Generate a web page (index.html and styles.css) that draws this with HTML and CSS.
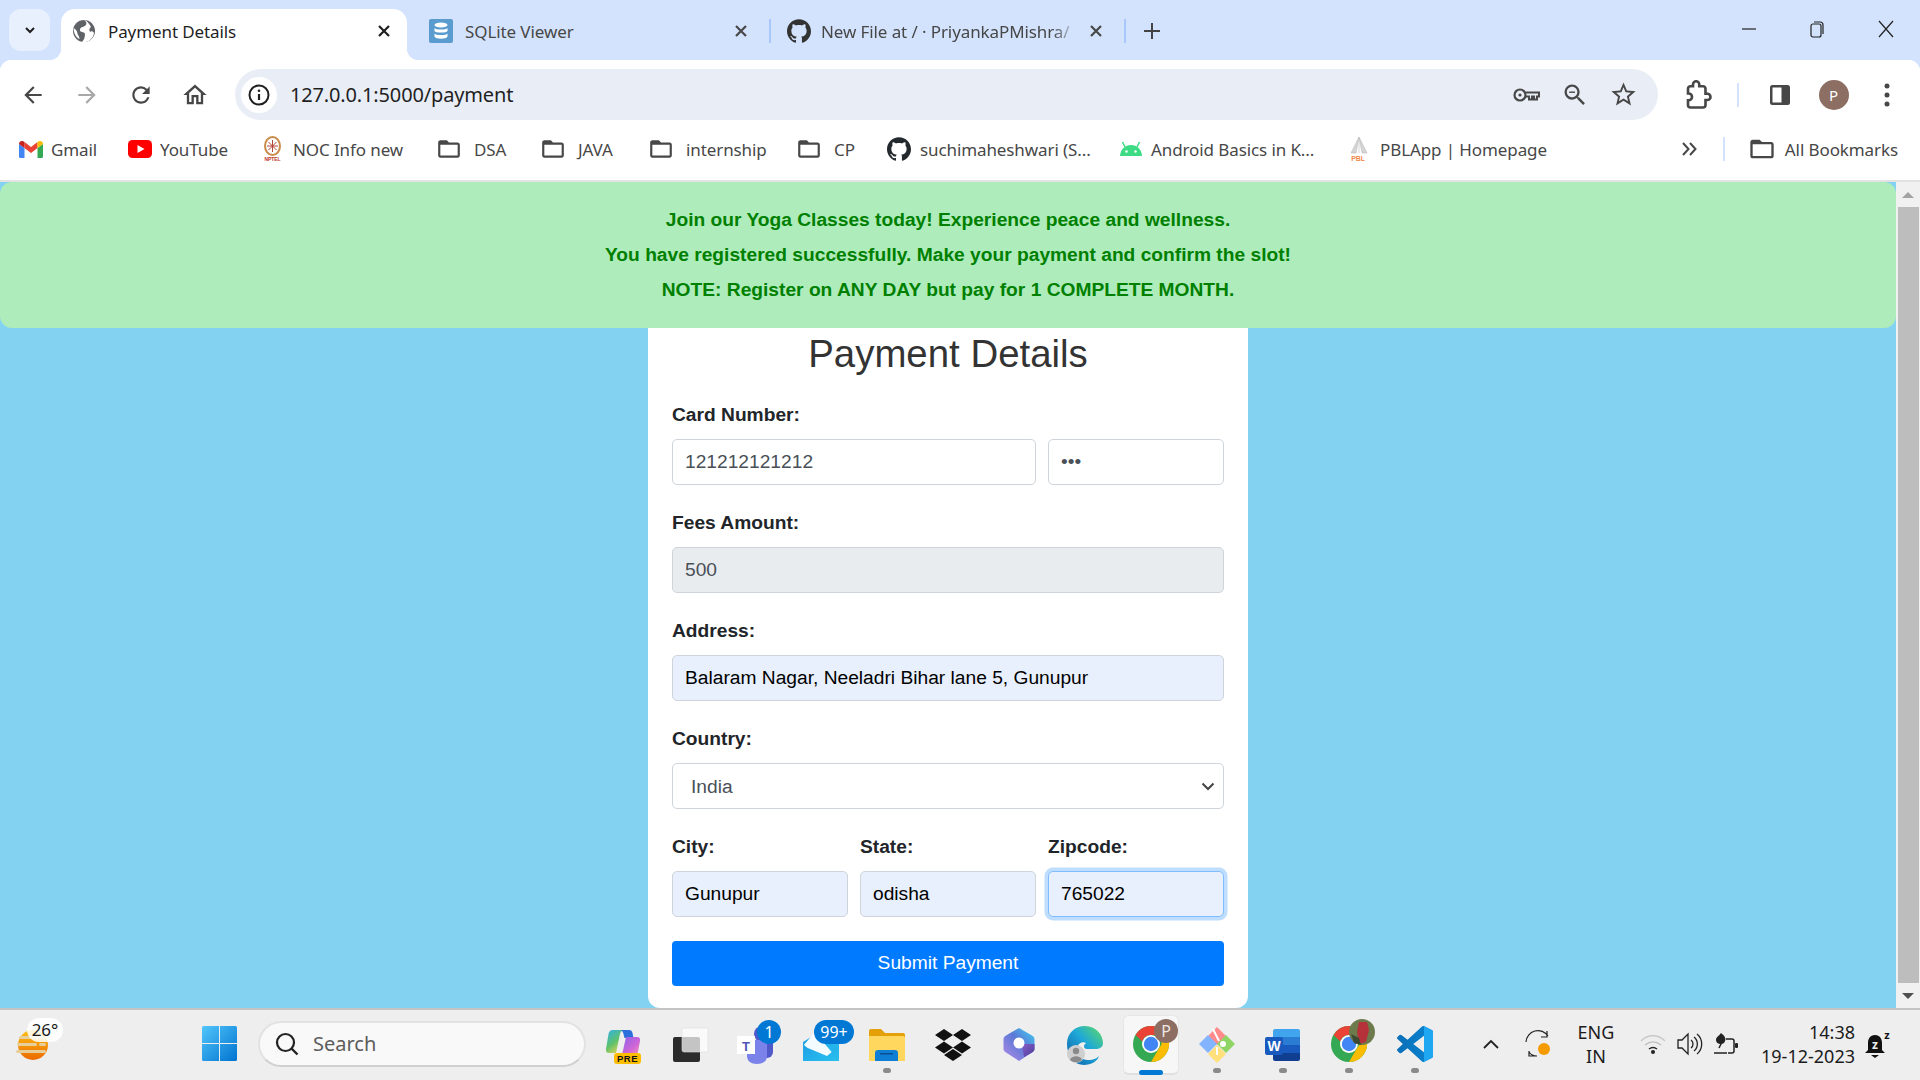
FILE: index.html
```html
<!DOCTYPE html>
<html lang="en">
<head>
<meta charset="utf-8">
<title>Payment Details</title>
<link rel="stylesheet" href="styles.css">
</head>
<body>
<svg class="defs" width="0" height="0" aria-hidden="true">
  <defs>
    <symbol id="gh" viewBox="0 0 24 24"><path d="M12 .297c-6.63 0-12 5.373-12 12 0 5.303 3.438 9.8 8.205 11.385.6.113.82-.258.82-.577 0-.285-.01-1.04-.015-2.04-3.338.724-4.042-1.61-4.042-1.61C4.422 18.07 3.633 17.7 3.633 17.7c-1.087-.744.084-.729.084-.729 1.205.084 1.838 1.236 1.838 1.236 1.07 1.835 2.809 1.305 3.495.998.108-.776.417-1.305.76-1.605-2.665-.3-5.466-1.332-5.466-5.93 0-1.31.465-2.38 1.235-3.22-.135-.303-.54-1.523.105-3.176 0 0 1.005-.322 3.3 1.23.96-.267 1.98-.399 3-.405 1.02.006 2.04.138 3 .405 2.28-1.552 3.285-1.23 3.285-1.23.645 1.653.24 2.873.12 3.176.765.84 1.23 1.91 1.23 3.22 0 4.61-2.805 5.625-5.475 5.92.42.36.81 1.096.81 2.22 0 1.606-.015 2.896-.015 3.286 0 .315.21.69.825.57C20.565 22.092 24 17.592 24 12.297c0-6.627-5.373-12-12-12"/></symbol>
    <symbol id="folder" viewBox="0 0 24 24"><path d="M20 6h-8l-2-2H4c-1.1 0-1.99.9-1.99 2L2 18c0 1.1.9 2 2 2h16c1.1 0 2-.9 2-2V8c0-1.1-.9-2-2-2zm0 12H4V8h16v10z" fill="#474747"/></symbol>
    <symbol id="x" viewBox="0 0 24 24"><path d="M6 6l12 12M18 6L6 18" stroke-width="2.6" fill="none"/></symbol>
    <symbol id="chrome" viewBox="0 0 48 48">
      <circle cx="24" cy="24" r="18" fill="#34a853"/>
      <path fill="#ea4335" d="M24 6a18 18 0 0 1 15.6 9H24a9 9 0 0 0-8.6 6.4L8.6 15A18 18 0 0 1 24 6z"/>
      <path fill="#fbbc04" d="M39.6 15A18 18 0 0 1 24 42l7.8-13.5a9 9 0 0 0 0-13.5z"/>
      <circle cx="24" cy="24" r="9" fill="#fff"/><circle cx="24" cy="24" r="7.2" fill="#4285f4"/>
    </symbol>
    <linearGradient id="gWin" x1="0" y1="0" x2="1" y2="1"><stop offset="0" stop-color="#52c6fb"/><stop offset="1" stop-color="#0073d0"/></linearGradient>
    <linearGradient id="gSun" x1="0" y1="0" x2="0" y2="1"><stop offset="0" stop-color="#fdc013"/><stop offset="1" stop-color="#ec6a00"/></linearGradient>
    <linearGradient id="gCop" x1="0" y1="0" x2=".6" y2="1"><stop offset="0" stop-color="#2fb0ea"/><stop offset=".6" stop-color="#5fc26a"/><stop offset="1" stop-color="#d8d25a"/></linearGradient>
    <linearGradient id="gCop2" x1="0" y1="0" x2="1" y2="1"><stop offset="0" stop-color="#8a63e6"/><stop offset=".6" stop-color="#d165d8"/><stop offset="1" stop-color="#f39ab0"/></linearGradient>
    <linearGradient id="gMail" x1="0" y1="0" x2="1" y2="1"><stop offset="0" stop-color="#1f9fe6"/><stop offset="1" stop-color="#28c0ee"/></linearGradient>
    <linearGradient id="gHex" x1="0" y1="1" x2="1" y2="0"><stop offset="0" stop-color="#b58be8"/><stop offset=".55" stop-color="#5b79d6"/><stop offset="1" stop-color="#3fd2f2"/></linearGradient>
    <linearGradient id="gHex2" x1="0" y1="0" x2="1" y2="1"><stop offset="0" stop-color="#8a5fc8"/><stop offset="1" stop-color="#4a3a98"/></linearGradient>
    <linearGradient id="gEdge" x1="0" y1="1" x2="1" y2="0"><stop offset="0" stop-color="#0c5aa6"/><stop offset=".55" stop-color="#1fa8d8"/><stop offset="1" stop-color="#5fdc63"/></linearGradient>
    <linearGradient id="gVs" x1="0" y1="0" x2="1" y2="0"><stop offset="0" stop-color="#0a6fb8"/><stop offset="1" stop-color="#0a84d0"/></linearGradient>
  </defs>
</svg>

<header class="browser">
  <div class="tabstrip">
    <button class="tab-search"><svg width="14" height="14" viewBox="0 0 14 14"><path d="M3 5l4 4 4-4" fill="none" stroke="#1f1f1f" stroke-width="2"/></svg></button>
    <div class="tab tab-active">
      <svg class="fav" width="24" height="24" viewBox="0 0 24 24"><circle cx="12" cy="12" r="11" fill="#5f6368"/><path d="M12 1c3 2 3 4 1 6-2 1-5 1-5 4s4 1 5 4c0 3-1 6-3 8 6 1 11-3 12-9-1-2-3-2-4-1-1-2-1-4 1-5-2-4-5-7-7-7zM1.500 9c2 1 4 3 4 6 1 2 2 3 2 5-3-1-6-6-6-11z" fill="#fff"/></svg>
      <span class="tab-title">Payment Details</span>
      <svg class="tab-x tab-x-dark" width="20" height="20"><use href="#x"/></svg>
    </div>
    <div class="tab tab-bg">
      <svg class="fav" width="24" height="24" viewBox="0 0 24 24"><rect width="24" height="24" rx="2" fill="#5a9bd0"/><g fill="#fff"><ellipse cx="12" cy="6" rx="6.500" ry="2.600"/><path d="M5.500 9c1 2 12 2 13 0v3c-1 2-12 2-13 0zM5.500 14.500c1 2 12 2 13 0v3c-1 3-12 3-13 0z"/></g></svg>
      <span class="tab-title">SQLite Viewer</span>
      <svg class="tab-x" width="20" height="20"><use href="#x"/></svg>
    </div>
    <i class="tab-sep"></i>
    <div class="tab tab-bg tab-gh">
      <svg class="fav fav-gh" width="24" height="24"><use href="#gh"/></svg>
      <span class="tab-title tab-fade">New File at / · PriyankaPMishra/</span>
      <svg class="tab-x" width="20" height="20"><use href="#x"/></svg>
    </div>
    <i class="tab-sep"></i>
    <svg class="new-tab" width="20" height="20" viewBox="0 0 20 20"><path d="M10 2v16M2 10h16" stroke="#444" stroke-width="2"/></svg>
    <div class="win-controls">
      <svg width="16" height="16" viewBox="0 0 16 16"><path d="M1 8h14" stroke="#222" stroke-width="1.200"/></svg>
      <svg width="16" height="18" viewBox="0 0 16 18"><rect x="2" y="4" width="10" height="13" rx="2" fill="none" stroke="#222" stroke-width="1.200"/><path d="M5 2h6a3 3 0 0 1 3 3v9" fill="none" stroke="#222" stroke-width="1.200"/></svg>
      <svg width="18" height="18" viewBox="0 0 18 18"><path d="M2 1l14 16M16 1L2 17" stroke="#222" stroke-width="1.200"/></svg>
    </div>
  </div>

  <div class="toolbar">
    <button class="tbtn"><svg width="26" height="26" viewBox="0 0 24 24"><path fill="#474747" d="M20 11H7.830l5.590-5.590L12 4l-8 8 8 8 1.410-1.410L7.830 13H20v-2z"/></svg></button>
    <button class="tbtn"><svg width="26" height="26" viewBox="0 0 24 24"><path fill="#a8a8a8" d="M12 4l-1.410 1.410L16.170 11H4v2h12.170l-5.580 5.590L12 20l8-8z"/></svg></button>
    <button class="tbtn"><svg width="26" height="26" viewBox="0 0 24 24"><path fill="#474747" d="M17.650 6.350A7.958 7.958 0 0 0 12 4c-4.420 0-7.990 3.580-7.990 8s3.570 8 7.990 8c3.730 0 6.840-2.550 7.730-6h-2.080A5.990 5.990 0 0 1 12 18c-3.310 0-6-2.690-6-6s2.690-6 6-6c1.660 0 3.140.690 4.220 1.780L13 11h7V4l-2.350 2.350z"/></svg></button>
    <button class="tbtn"><svg width="28" height="28" viewBox="0 0 24 24"><path fill="#474747" d="M12 5.690l5 4.500V18h-2v-6H9v6H7v-7.810l5-4.500M12 3L2 12h3v8h6v-6h2v6h6v-8h3L12 3z"/></svg></button>
    <div class="omnibox">
      <span class="site-info"><svg width="24" height="24" viewBox="0 0 24 24"><circle cx="12" cy="12" r="9.500" fill="none" stroke="#1f1f1f" stroke-width="2"/><path d="M12 11v6" stroke="#1f1f1f" stroke-width="2.200"/><circle cx="12" cy="7.800" r="1.300" fill="#1f1f1f"/></svg></span>
      <span class="url">127.0.0.1:5000/payment</span>
      <span class="omni-actions">
        <button class="obtn"><svg width="30" height="30" viewBox="0 0 30 30"><circle cx="9" cy="15" r="5.500" fill="none" stroke="#474747" stroke-width="2.200"/><circle cx="9" cy="15" r="1.600" fill="#474747"/><path d="M14.500 12.500H28v4h-2v3h-3v-3h-2v3h-3v-3h-3.500" fill="none" stroke="#474747" stroke-width="2"/></svg></button>
        <button class="obtn"><svg width="28" height="28" viewBox="0 0 24 24"><path fill="#474747" d="M15.500 14h-.790l-.280-.270A6.471 6.471 0 0 0 16 9.500 6.500 6.500 0 1 0 9.500 16c1.610 0 3.090-.590 4.230-1.570l.270.280v.790l5 4.990L20.490 19l-4.990-5zm-6 0C7.010 14 5 11.990 5 9.500S7.010 5 9.500 5 14 7.010 14 9.500 11.990 14 9.500 14z"/><path fill="#474747" d="M7 9h5v1.200H7z"/></svg></button>
        <button class="obtn"><svg width="29" height="29" viewBox="0 0 24 24"><path fill="#474747" d="M22 9.240l-7.190-.620L12 2 9.190 8.630 2 9.240l5.460 4.730L5.820 21 12 17.270 18.180 21l-1.630-7.030L22 9.240zM12 15.400l-3.760 2.270 1-4.280-3.320-2.880 4.380-.380L12 6.100l1.710 4.040 4.380.380-3.320 2.880 1 4.280L12 15.400z"/></svg></button>
      </span>
    </div>
    <button class="tbtn tbtn-ext"><svg width="30" height="30" viewBox="0 0 24 24"><path fill="none" stroke="#474747" stroke-width="2.100" d="M18 11V7c0-1.100-.9-2-2-2h-3V3.500C13 2.120 11.880 1 10.500 1S8 2.120 8 3.500V5H6c-1.100 0-2 .9-2 2v3.800h.5c1.490 0 2.700 1.210 2.700 2.700s-1.210 2.700-2.700 2.700H4V20c0 1.100.9 2 2 2h10c1.100 0 2-.9 2-2v-4h1.500c1.380 0 2.500-1.120 2.500-2.500S20.880 11 19.500 11z"/></svg></button>
    <i class="tool-sep"></i>
    <button class="tbtn"><svg width="24" height="24" viewBox="0 0 24 24"><rect x="2" y="2" width="20" height="20" rx="2.500" fill="#474747"/><rect x="4.500" y="4.500" width="9" height="15" fill="#fff"/></svg></button>
    <button class="tbtn tbtn-avatar"><span class="avatar">P</span></button>
    <button class="tbtn"><svg width="8" height="28" viewBox="0 0 8 28"><circle cx="4" cy="5" r="2.500" fill="#474747"/><circle cx="4" cy="14" r="2.500" fill="#474747"/><circle cx="4" cy="23" r="2.500" fill="#474747"/></svg></button>
  </div>

  <nav class="bookmarks">
    <a class="bm bm-gmail"><svg width="24" height="18" viewBox="0 0 24 18"><path fill="#4285f4" d="M0 4v12.500A1.500 1.500 0 0 0 1.500 18h4V8z"/><path fill="#34a853" d="M18.500 8v10h4a1.500 1.500 0 0 0 1.500-1.500V4z"/><path fill="#ea4335" d="M5.500 8V2L12 7l6.500-5v6L12 13z"/><path fill="#c5221f" d="M0 4c0-3 3.500-4 5.500-2v6z"/><path fill="#fbbc04" d="M18.500 2c2-2 5.500-1 5.500 2l-5.500 4z"/></svg>Gmail</a>
    <a class="bm bm-yt"><svg width="24" height="18" viewBox="0 0 24 18"><rect width="24" height="18" rx="4.500" fill="#f00"/><path d="M9.500 5l7 4-7 4z" fill="#fff"/></svg>YouTube</a>
    <a class="bm bm-noc"><svg width="21" height="26" viewBox="0 0 21 26"><ellipse cx="10.500" cy="10" rx="7.500" ry="9" fill="none" stroke="#c98a4a" stroke-width="2"/><g stroke="#b5453a" stroke-width="1"><path d="M10.500 4v12M5 10h11M6.500 6l8 8M14.500 6l-8 8"/></g><text x="10.500" y="25" class="t-noc">NPTEL</text></svg>NOC Info new</a>
    <a class="bm bm-f1"><svg width="26" height="26"><use href="#folder"/></svg>DSA</a>
    <a class="bm bm-f2"><svg width="26" height="26"><use href="#folder"/></svg>JAVA</a>
    <a class="bm bm-f3"><svg width="26" height="26"><use href="#folder"/></svg>internship</a>
    <a class="bm bm-f4"><svg width="26" height="26"><use href="#folder"/></svg>CP</a>
    <a class="bm bm-gh"><svg width="24" height="24" class="gh-dark"><use href="#gh"/></svg>suchimaheshwari (S...</a>
    <a class="bm bm-and"><svg width="24" height="18" viewBox="0 0 24 18"><path d="M1 16C1.500 9 6 5 12 5s10.500 4 11 11z" fill="#3ddc84"/><path d="M6 7L3.500 2M18 7l2.500-5" stroke="#3ddc84" stroke-width="1.500"/><circle cx="7.500" cy="11.500" r="1.200" fill="#fff"/><circle cx="16.500" cy="11.500" r="1.200" fill="#fff"/></svg>Android Basics in K...</a>
    <a class="bm bm-pbl"><svg width="18" height="26" viewBox="0 0 18 26"><path d="M9 1L1 17h5zM9 1l8 16h-5zM9 3v14" fill="#d5d5d5" stroke="#bbb" stroke-width=".6"/><text x="8" y="25" class="t-pbl">PBL</text></svg>PBLApp | Homepage</a>
    <span class="bm-more"><svg width="18" height="18" viewBox="0 0 18 18"><path d="M3 3l5.500 6L3 15M10 3l5.500 6L10 15" fill="none" stroke="#474747" stroke-width="2"/></svg></span>
    <i class="bm-sep"></i>
    <a class="bm bm-all"><svg width="28" height="28"><use href="#folder"/></svg>All Bookmarks</a>
  </nav>
</header>

<main class="viewport">
  <div class="page">
    <section class="banner">
      <p>Join our Yoga Classes today! Experience peace and wellness.</p>
      <p>You have registered successfully. Make your payment and confirm the slot!</p>
      <p>NOTE: Register on ANY DAY but pay for 1 COMPLETE MONTH.</p>
    </section>
    <form class="card">
      <h2>Payment Details</h2>
      <div class="grid3 group">
        <label class="span3">Card Number:</label>
        <input class="field span2" type="text" value="121212121212">
        <input class="field" type="password" value="123">
      </div>
      <div class="group">
        <label>Fees Amount:</label>
        <input class="field field-disabled" type="text" value="500" readonly>
      </div>
      <div class="group">
        <label>Address:</label>
        <input class="field field-auto" type="text" value="Balaram Nagar, Neeladri Bihar lane 5, Gunupur">
      </div>
      <div class="group">
        <label>Country:</label>
        <select class="field field-select"><option>India</option></select>
      </div>
      <div class="grid3 group-last">
        <div><label>City:</label><input class="field field-auto" type="text" value="Gunupur"></div>
        <div><label>State:</label><input class="field field-auto" type="text" value="odisha"></div>
        <div><label>Zipcode:</label><input class="field field-auto field-focus" type="text" value="765022"></div>
      </div>
      <button type="button" class="submit">Submit Payment</button>
    </form>
  </div>
  <aside class="scrollbar">
    <span class="sb-btn"><i class="tri tri-up"></i></span>
    <span class="sb-thumb"></span>
    <span class="sb-btn"><i class="tri tri-down"></i></span>
  </aside>
</main>

<footer class="taskbar">
  <div class="weather">
    <svg width="48" height="44" viewBox="0 0 48 44"><circle cx="32" cy="27" r="15" fill="url(#gSun)"/><g fill="#e7cf9b"><rect x="18" y="18" width="26" height="3" rx="1.500"/><rect x="16" y="25" width="20" height="3" rx="1.500"/><rect x="38" y="25" width="7" height="3" rx="1.500"/><rect x="15" y="32" width="30" height="3" rx="1.500"/></g></svg>
    <span class="temp">26°</span>
  </div>
  <svg class="win-logo" width="35" height="35" viewBox="0 0 35 35"><path fill="url(#gWin)" d="M1.500 0H17v17H0V1.500A1.500 1.500 0 0 1 1.500 0zM18 0h15.500A1.500 1.500 0 0 1 35 1.500V17H18zM0 18h17v17H1.500A1.500 1.500 0 0 1 0 33.500zM18 18h17v15.500a1.500 1.500 0 0 1-1.500 1.500H18z"/></svg>
  <div class="search">
    <svg width="26" height="26" viewBox="0 0 26 26"><circle cx="11.500" cy="11.500" r="8.500" fill="none" stroke="#222" stroke-width="2.200"/><path d="M17.500 17.500l6 6" stroke="#222" stroke-width="2.400"/></svg>
    <span>Search</span>
  </div>
  <div class="apps">
    <div class="app"><svg width="48" height="48" viewBox="0 0 48 48"><path d="M14 10c-3 0-4 2-4.500 4L7 29c-.4 3 1 4 3.500 4H17l4-19c.5-2 2-4 4-4z" fill="url(#gCop)"/><path d="M21 10h9c2 0 3 1 3.500 3l1 5h-9l-1-4c-.5-2-1.500-4-3.500-4z" fill="#2a6fdc"/><path d="M27 17h11c2.500 0 3.500 1.500 3 4l-2 11c-.5 2-2 3-4 3H23z" fill="url(#gCop2)"/><rect x="15" y="33" width="27" height="11" rx="3" fill="#fdbd00"/><text x="28.500" y="42" class="t-pre">PRE</text></svg></div>
    <div class="app"><svg width="48" height="48" viewBox="0 0 48 48"><rect x="8" y="17" width="27" height="25" rx="2" fill="#2b2b2b"/><rect x="17" y="8" width="26" height="24" rx="2" fill="#fff" fill-opacity=".72" stroke="#ddd" stroke-width=".6"/></svg></div>
    <div class="app"><svg class="over" width="48" height="48" viewBox="0 0 48 48"><circle cx="31" cy="14" r="8" fill="#5059c9"/><path d="M30 18h12v14a6 6 0 0 1-6 6h-6z" fill="#5059c9"/><path d="M16 20h20v16c0 5-4 8-10 8s-10-3-10-8z" fill="#7b83eb"/><rect x="6" y="16" width="18" height="18" fill="#fff"/><text x="15" y="31" class="t-t">T</text><circle cx="38" cy="12" r="12" fill="#0078d4"/><text x="38" y="18" class="t-badge">1</text></svg></div>
    <div class="app"><svg class="over" width="48" height="48" viewBox="0 0 48 48"><path d="M6 22l13-8 23 8v19H6z" fill="url(#gMail)"/><path d="M6 26l12-14 24 29z" fill="#fff" opacity=".95"/><path d="M6 41V24l18 17zM24 41l18-15v15z" fill="url(#gMail)"/><rect x="17" y="0" width="40" height="24" rx="12" fill="#0078d4"/><text x="37" y="18" class="t-badge">99+</text></svg></div>
    <div class="app app-dot"><svg width="48" height="48" viewBox="0 0 48 48"><path d="M6 11a2 2 0 0 1 2-2h10l4 4h18a2 2 0 0 1 2 2v4H6z" fill="#e3a008"/><path d="M6 16h34a2 2 0 0 1 2 2v23H6z" fill="#ffd75e"/><path d="M12 33a3 3 0 0 1 3-3h17a3 3 0 0 1 3 3v8H12z" fill="#0f7fd6"/><rect x="17" y="33" width="13" height="1.500" fill="#0a4f8f"/></svg></div>
    <div class="app"><svg width="48" height="48" viewBox="0 0 48 48"><g fill="#111"><path d="M15 9l9 6-9 6-9-6zM33 9l9 6-9 6-9-6zM15 21.500l9 6-9 6-9-6zM33 21.500l9 6-9 6-9-6zM24 29l9 6-9 6-9-6z"/></g></svg></div>
    <div class="app"><svg width="48" height="48" viewBox="0 0 48 48"><path d="M24 8l13 7.500c1.500 1 2.500 2 2.500 3.500v10c0 1.500-1 2.500-2.500 3.500L24 41l-13-8.500C9.500 31.500 8.500 30.500 8.500 29V19c0-1.500 1-2.500 2.500-3.500z" fill="url(#gHex)"/><path d="M27 24h12.500v5c0 1.500-1 2.500-2.500 3.500L29 37z" fill="url(#gHex2)"/><circle cx="24" cy="23" r="5.500" fill="#fff"/></svg></div>
    <div class="app"><svg width="48" height="48" viewBox="0 0 48 48"><path d="M6 24C6 13 14 6 24 6c11 0 18 9 18 17 0 4-3 6-8 6h-8c-2 0-3-1-3-3 0-1 1-2 2-3-3-2-8 0-9 5-.5 6 4 12 11 12 6 0 9-2 11-4-1 5-8 9-15 9C13 45 6 36 6 24z" fill="url(#gEdge)"/><circle cx="15" cy="34" r="9" fill="#cfcfcf"/><circle cx="15" cy="31" r="3.200" fill="#8a8a8a"/><path d="M9 40c1-5 11-5 12 0a9 9 0 0 1-12 0z" fill="#8a8a8a"/></svg></div>
    <div class="app app-active"><svg class="over" width="48" height="48" viewBox="0 0 48 48"><use href="#chrome"/><circle cx="39" cy="11" r="12" fill="#8d6e63"/><text x="39" y="17" class="t-p">P</text></svg></div>
    <div class="app app-dot"><svg width="48" height="48" viewBox="0 0 48 48"><path d="M24 25L15 16l9-9 9 9z" fill="#ff8a8a"/><path d="M15 15l9 9-9 9-9-9z" fill="#83b4ff"/><path d="M33 15l9 9-9 9-9-9z" fill="#8ed565"/><path d="M24 25l9 9-9 9-9-9z" fill="#ffe07a"/><circle cx="30" cy="24" r="3" fill="#fff"/><path d="M20 9l6 12M24 27v8" stroke="#fff" stroke-width="2"/></svg></div>
    <div class="app app-dot"><svg width="48" height="48" viewBox="0 0 48 48"><path d="M14 11a2 2 0 0 1 2-2h23a2 2 0 0 1 2 2v6H14z" fill="#41a5ee"/><rect x="14" y="17" width="27" height="8" fill="#2b7cd3"/><rect x="14" y="25" width="27" height="8" fill="#185abd"/><path d="M14 33h27v6a2 2 0 0 1-2 2H16a2 2 0 0 1-2-2z" fill="#103f91"/><rect x="6" y="17" width="18" height="18" rx="2" fill="#185abd"/><text x="15" y="31" class="t-w">W</text></svg></div>
    <div class="app app-dot"><svg class="over" width="48" height="48" viewBox="0 0 48 48"><use href="#chrome"/><circle cx="37" cy="12" r="13" fill="#6d7a4b"/><path d="M34 2h8l2 8-3 12-7 2-2-12z" fill="#b5323a"/><path d="M26 14l8 4 2 7-7-2z" fill="#3d4a33"/></svg></div>
    <div class="app app-dot"><svg width="36" height="36" viewBox="0 0 24 24"><path fill="url(#gVs)" d="M23.150 2.587L18.210.21a1.494 1.494 0 0 0-1.705.29l-9.460 8.630-4.120-3.128a.999.999 0 0 0-1.276.057L.327 7.261A1 1 0 0 0 .326 8.740L3.899 12 .326 15.260a1 1 0 0 0 .001 1.479L1.650 17.940a.999.999 0 0 0 1.276.057l4.120-3.128 9.460 8.630a1.492 1.492 0 0 0 1.704.29l4.942-2.377A1.500 1.500 0 0 0 24 20.060V3.939a1.500 1.500 0 0 0-.85-1.352zm-5.146 14.861L10.826 12l7.178-5.448v10.896z"/><path fill="#1fa8f1" d="M18.004.03c.07.04.14.09.206.18l4.94 2.377A1.500 1.500 0 0 1 24 3.939V20.060a1.500 1.500 0 0 1-.85 1.352l-4.942 2.377c-.07.03-.14.06-.204.08z"/></svg></div>
  </div>
  <div class="tray">
    <span class="tray-i tray-chev"><svg width="18" height="12" viewBox="0 0 18 12"><path d="M2 10l7-7 7 7" fill="none" stroke="#222" stroke-width="1.800"/></svg></span>
    <span class="tray-i tray-sync"><svg width="28" height="28" viewBox="0 0 28 28"><path d="M1 12A12 12 0 0 1 23 6M22 1v6h-6M4 21v5h6M4 22c2 3 5 4 8 4" fill="none" stroke="#222" stroke-width="1.200"/><circle cx="19" cy="19" r="6" fill="#f59b00"/></svg></span>
    <span class="tray-lang"><span>ENG</span><span>IN</span></span>
    <span class="tray-i"><svg width="26" height="22" viewBox="0 0 26 22"><path d="M1 8c7-7 17-7 24 0" fill="none" stroke="#c8c8c8" stroke-width="1.300"/><path d="M5 12c5-4 11-4 16 0" fill="none" stroke="#bdbdbd" stroke-width="1.300"/><path d="M9 16c2.500-2 5.500-2 8 0" fill="none" stroke="#222" stroke-width="1.500"/><circle cx="13" cy="19" r="2" fill="#222"/></svg></span>
    <span class="tray-i"><svg width="26" height="24" viewBox="0 0 26 24"><path d="M2 8h4l6-6v20l-6-6H2z" fill="none" stroke="#222" stroke-width="1.300"/><path d="M15 8a5 5 0 0 1 0 8M18 5a9 9 0 0 1 0 14M21 2a13 13 0 0 1 0 20" fill="none" stroke="#222" stroke-width="1.300"/></svg></span>
    <span class="tray-i"><svg width="26" height="24" viewBox="0 0 26 24"><path d="M9 1c4 3 6 6 3 10-3 2-8 1-8-3 0-3 3-4 5-7z" fill="#222"/><path d="M2 21h13" stroke="#222" stroke-width="1.500"/><path d="M7 16l3-6M14 7h6a2 2 0 0 1 2 2v10a2 2 0 0 1-2 2h-4" fill="none" stroke="#222" stroke-width="1.500"/><rect x="23" y="11" width="3" height="5" rx="1" fill="#222"/></svg></span>
    <span class="clock"><span>14:38</span><span>19-12-2023</span></span>
    <span class="tray-i tray-bell"><svg width="30" height="32" viewBox="0 0 30 32"><path d="M12 7c-5 0-7 4-7 8v7l-3 3h20l-3-3v-7c0-4-2-8-7-8z" fill="#111"/><path d="M8 27h8l-4 3z" fill="#111"/><text x="12" y="21" class="t-z">z</text><text x="24" y="11" class="t-z2">z</text></svg></span>
  </div>
</footer>
</body>
</html>
```

FILE: styles.css
```css
* { box-sizing: border-box; }
html, body { margin: 0; height: 100%; }
body {
  height: 100vh;
  overflow: hidden;
  display: flex;
  flex-direction: column;
  font-family: "Noto Sans", "Open Sans", sans-serif;
  color: #1f1f1f;
}
.defs { position: absolute; }
button { border: 0; background: none; padding: 0; font: inherit; }

/* browser chrome */
.browser { flex: none; height: 182px; background: #fff; border-bottom: 2px solid #e3e3e3; }
.tabstrip { height: 60px; background: #d3e3fd; display: flex; align-items: flex-start; padding-left: 9px; }
.tab-search {
  width: 41px; height: 42px; margin-top: 9px; border-radius: 12px; background: #e9f0fd;
  display: flex; align-items: center; justify-content: center;
}
.tab {
  height: 51px; margin-top: 9px; display: flex; align-items: center; position: relative; font-size: 17px; letter-spacing: -.1px;
}
.tab-active {
  width: 346px; margin-left: 11px; background: #fff; border-radius: 14px 14px 0 0; padding: 0 13px 7px 11px; color: #1f1f1f;
}
.tab-active::before, .tab-active::after {
  content: ""; position: absolute; bottom: 0; width: 12px; height: 12px;
}
.tab-active::before { left: -12px; background: radial-gradient(circle at 0 0, transparent 12px, #fff 12.5px); }
.tab-active::after { right: -12px; background: radial-gradient(circle at 100% 0, transparent 12px, #fff 12.5px); }
.tab-bg { color: #474747; padding-bottom: 7px; }
.tab-active + .tab-bg { width: 340px; margin-left: 22px; padding-right: 18px; }
.tab-gh { width: 337px; padding-right: 18px; }
.fav { flex: none; fill: #1f1f1f; }
.fav-gh { fill: #333; }
.tab-title { flex: 1; margin-left: 12px; white-space: nowrap; overflow: hidden; }
.tab-fade { -webkit-mask-image: linear-gradient(90deg, #000 90%, transparent 100%); mask-image: linear-gradient(90deg, #000 90%, transparent 100%); }
.tab-x { flex: none; stroke: #474747; margin-left: 8px; }
.tab-x-dark { stroke: #1f1f1f; }
.tab-sep { flex: none; width: 2px; height: 24px; margin-top: 19px; background: #a8c7fa; }
.tab-sep + .tab-gh { margin-left: 16px; }
.tab-gh .tab-title { margin-left: 10px; }
.new-tab { margin: 21px 0 0 16px; }
.win-controls { margin-left: auto; display: flex; align-items: center; gap: 52px; height: 60px; padding: 0 25px 2px 0; }

.toolbar { height: 60px; background: #fff; display: flex; align-items: center; padding: 9px 6px 0; position: relative; }
.toolbar::before, .toolbar::after { content: ""; position: absolute; top: 0; width: 12px; height: 12px; }
.toolbar::before { left: 0; background: radial-gradient(circle at 100% 100%, #fff 12px, #d3e3fd 12.5px); }
.toolbar::after { right: 0; background: radial-gradient(circle at 0 100%, #fff 12px, #d3e3fd 12.5px); }
.tbtn { width: 54px; height: 48px; flex: none; display: flex; align-items: center; justify-content: center; }
.omnibox {
  flex: 1; height: 51px; margin: 0 14px 0 13px; background: #e9eef6; border-radius: 26px;
  display: flex; align-items: center; padding: 0 10px 0 6px;
}
.site-info { width: 36px; height: 36px; border-radius: 50%; background: #fff; display: flex; align-items: center; justify-content: center; }
.url { margin-left: 13px; font-size: 20px; letter-spacing: -.15px; color: #1f1f1f; }
.omni-actions { margin-left: auto; display: flex; }
.obtn { width: 49px; height: 40px; display: flex; align-items: center; justify-content: center; }
.tool-sep { width: 2px; height: 24px; background: #d3e3fd; margin: 0 14px 0 11px; }
.tbtn-ext { padding-right: 3px; }
.tbtn-avatar { width: 53px; }
.avatar { width: 30px; height: 30px; border-radius: 50%; background: #8d6e63; color: #fff; font-size: 15px; display: flex; align-items: center; justify-content: center; }

.bookmarks { height: 60px; display: flex; align-items: center; padding: 0 22px 2px 19px; font-size: 17px; letter-spacing: -.1px; color: #474747; }
.bm { display: flex; align-items: center; gap: 8px; white-space: nowrap; flex: none; }
.bm-gmail { width: 109px; }
.bm-yt { width: 134px; }
.bm-noc { width: 174px; gap: 10px; }
.bm-f1 { width: 104px; gap: 12px; }
.bm-f2 { width: 108px; gap: 12px; }
.bm-f3 { width: 148px; gap: 12px; }
.bm-f4 { width: 91px; gap: 12px; }
.bm-gh { width: 232px; gap: 9px; }
.bm-and { width: 231px; }
.bm-pbl { gap: 12px; }
.bm-more { margin-left: auto; display: flex; }
.bm-sep { width: 2px; height: 24px; background: #d3e3fd; margin: 0 23px 0 25px; }
.gh-dark { fill: #24292e; }
.bm-all { gap: 9px; }
.t-noc { font: 700 5px "Liberation Sans", sans-serif; fill: #c0392b; text-anchor: middle; }
.t-pbl { font: 700 7px "Liberation Sans", sans-serif; fill: #f08a4b; text-anchor: middle; }

/* viewport */
.viewport { flex: none; height: 826px; display: flex; overflow: hidden; }
.page { flex: 1; background: #84d2f2; font-family: "Liberation Sans", Arial, sans-serif; font-size: 19.2px; }
.banner {
  height: 146px; padding-top: 23px; background: #afecbb; border-radius: 12px; color: #008000; font-weight: 700; text-align: center; font-size: 19.2px;
}
.banner p { margin: 0 0 6px; line-height: 29px; }
.card {
  width: 600px; margin: 0 auto; padding: 3px 24px 22px; background: #fff; border-radius: 0 0 12px 12px;
  color: #212529;
}
.card h2 { margin: 0 0 23px; font-size: 38.4px; line-height: 46px; font-weight: 400; text-align: center; color: #333; }
.card label { display: block; font-weight: 700; line-height: 29px; margin-bottom: 10px; }
.group { margin-bottom: 23px; }
.group-last { margin-bottom: 24px; }
.grid3 { display: grid; grid-template-columns: repeat(3, 176px); column-gap: 12px; }
.span3 { grid-column: span 3; }
.span2 { grid-column: span 2; }
.field {
  display: block; width: 100%; height: 46px; padding: 0 12px; border: 1.5px solid #ced4da; border-radius: 5px;
  background: #fff; color: #495057; font: 19.2px "Liberation Sans", Arial, sans-serif; outline: none;
}
.field-disabled { background: #e9ecef; }
.field-auto { background: #e8f0fe; color: #000; }
.field-focus { border-color: #80bdff; box-shadow: 0 0 0 3.500px rgba(0, 123, 255, .25); }
.field-select {
  -webkit-appearance: none; appearance: none; padding-left: 18px;
  background: #fff url("data:image/svg+xml,%3Csvg xmlns='http://www.w3.org/2000/svg' width='14' height='9' viewBox='0 0 14 9'%3E%3Cpath d='M1.500 1.500L7 7l5.500-5.500' fill='none' stroke='%23444' stroke-width='2'/%3E%3C/svg%3E") no-repeat right 8px center;
}
.submit {
  display: block; width: 100%; height: 45px; background: #007bff; color: #fff; border-radius: 4px;
  font: 19.2px "Liberation Sans", Arial, sans-serif; text-align: center; padding-bottom: 2px;
}
.scrollbar { flex: none; width: 24px; background: #f1f1f1; display: flex; flex-direction: column; align-items: center; }
.sb-btn { flex: none; height: 25px; width: 100%; display: flex; align-items: center; justify-content: center; }
.sb-thumb { flex: 1; width: 21px; background: #bdbdbd; }
.tri { width: 0; height: 0; border-left: 6px solid transparent; border-right: 6px solid transparent; }
.tri-up { border-bottom: 6px solid #a3a3a3; }
.tri-down { border-top: 6px solid #505050; }

/* taskbar */
.taskbar { flex: 1; min-height: 0; display: flex; align-items: center; background: #eeeeee; border-top: 2px solid #c4c4c4; position: relative; }
.weather { width: 202px; height: 100%; flex: none; position: relative; padding: 8px 0 0 1px; }
.temp {
  position: absolute; left: 27px; top: 8px; width: 36px; height: 24px; border-radius: 12px; background: rgba(255, 255, 255, .85);
  font-size: 17px; line-height: 24px; text-align: center; color: #1a1a1a;
}
.win-logo { flex: none; margin-bottom: 4px; }
.search {
  flex: none; width: 328px; height: 46px; margin: 0 0 3px 21px; border-radius: 23px; background: #f9f9f9; border: 2px solid #e2e2e2; border-bottom-color: #d0d0d0;
  display: flex; align-items: center; gap: 13px; padding-left: 14px; font-size: 20px; color: #5c5c5c;
}
.apps { flex: none; width: 858px; margin-left: 4px; display: flex; height: 100%; }
.app { flex: none; width: 66px; height: 100%; padding-bottom: 2px; display: flex; align-items: center; justify-content: center; position: relative; }
.app svg { position: relative; overflow: visible; }
.app-dot::after {
  content: ""; position: absolute; left: 29px; bottom: 7px; width: 8px; height: 5px; border-radius: 3px; background: #8a8a8a;
}
.app-active::before {
  content: ""; position: absolute; left: 5px; right: 5px; top: 5px; bottom: 5px; border-radius: 6px; background: #f7f7f7; border: 1px solid #e6e6e6; border-bottom: 2px solid #e0e0e0;
}
.app-active::after {
  content: ""; position: absolute; left: 21px; width: 24px; bottom: 5px; height: 5px; border-radius: 3px; background: #0078d4;
}
.t-pre { font: 700 9.500px "Liberation Sans", sans-serif; fill: #111; text-anchor: middle; letter-spacing: .5px; }
.t-t { font: 700 13px "Liberation Sans", sans-serif; fill: #4f56b8; text-anchor: middle; }
.t-w { font: 700 14px "Liberation Sans", sans-serif; fill: #fff; text-anchor: middle; }
.t-badge { font: 400 16px "Noto Sans", sans-serif; fill: #fff; text-anchor: middle; }
.t-p { font: 400 16px "Noto Sans", sans-serif; fill: #efe7e3; text-anchor: middle; }
.t-z { font: 700 12px "Noto Sans", sans-serif; fill: #eee; text-anchor: middle; }
.t-z2 { font: 700 11px "Noto Sans", sans-serif; fill: #111; text-anchor: middle; }
.tray { flex: 1; display: flex; align-items: center; margin-left: 19px; height: 100%; font-size: 18px; color: #1c1c1c; padding-bottom: 3px; }
.tray-i { flex: none; width: 36px; display: flex; align-items: center; justify-content: center; }
.tray-i svg { overflow: visible; }
.tray-chev { width: 48px; }
.tray-sync { width: 48px; }
.tray-lang { flex: none; width: 66px; margin-right: 6px; display: flex; flex-direction: column; align-items: center; line-height: 24px; }
.clock { flex: none; width: 112px; display: flex; flex-direction: column; align-items: flex-end; line-height: 24px; }
.tray-bell { margin-left: 5px; }
```
